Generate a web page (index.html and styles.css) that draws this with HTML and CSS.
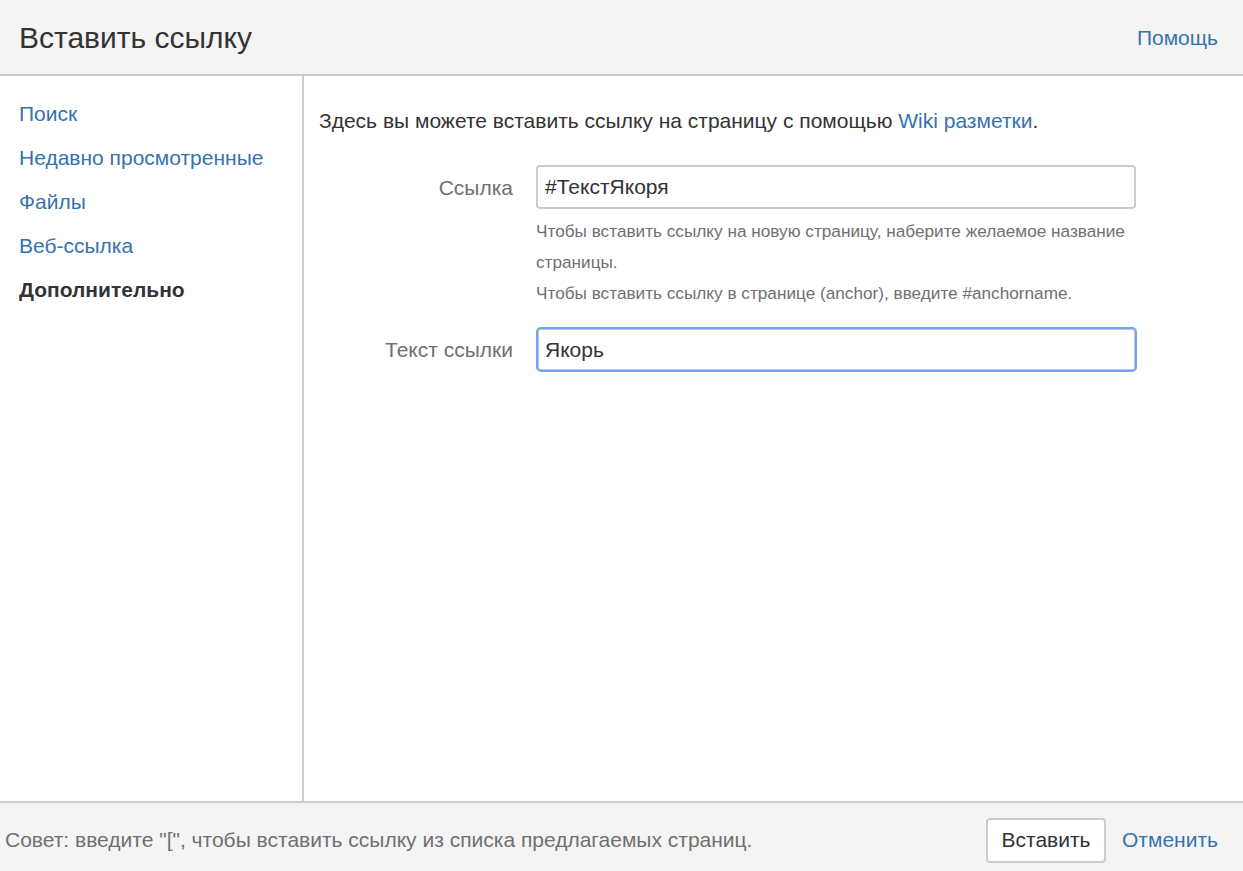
FILE: index.html
```html
<!DOCTYPE html>
<html lang="ru">
<head>
<meta charset="utf-8">
<title>Вставить ссылку</title>
<link rel="stylesheet" href="styles.css">
</head>
<body>
<div class="dialog">
  <header class="dlg-header">
    <h2 class="dlg-title">Вставить ссылку</h2>
    <a class="link help" href="#">Помощь</a>
  </header>
  <div class="dlg-body">
    <nav class="sidebar">
      <a class="nav-item link" href="#">Поиск</a>
      <a class="nav-item link" href="#">Недавно просмотренные</a>
      <a class="nav-item link" href="#">Файлы</a>
      <a class="nav-item link" href="#">Веб-ссылка</a>
      <span class="nav-item active">Дополнительно</span>
    </nav>
    <main class="content">
      <p class="intro">Здесь вы можете вставить ссылку на страницу с помощью <a class="link" href="#">Wiki разметки</a>.</p>
      <div class="field">
        <label class="label">Ссылка</label>
        <div class="control">
          <div class="input">#ТекстЯкоря</div>
          <div class="hint">Чтобы вставить ссылку на новую страницу, наберите желаемое название страницы.<br>Чтобы вставить ссылку в странице (anchor), введите #anchorname.</div>
        </div>
      </div>
      <div class="field field2">
        <label class="label">Текст ссылки</label>
        <div class="control">
          <div class="input focus">Якорь</div>
        </div>
      </div>
    </main>
  </div>
  <footer class="dlg-footer">
    <span class="tip">Совет: введите "[", чтобы вставить ссылку из списка предлагаемых страниц.</span>
    <div class="actions">
      <button class="btn">Вставить</button>
      <a class="link cancel" href="#">Отменить</a>
    </div>
  </footer>
</div>
</body>
</html>
```
FILE: styles.css
```css
* { box-sizing: border-box; }
html, body { margin: 0; padding: 0; }
body {
  font-family: "Liberation Sans", Arial, sans-serif;
  color: #333;
  background: #fff;
  width: 1243px;
  height: 871px;
  overflow: hidden;
}
.dialog {
  display: flex;
  flex-direction: column;
  height: 871px;
}
.link { color: #3572b0; text-decoration: none; }
.dlg-header {
  height: 76px;
  background: #f4f4f4;
  border-bottom: 2px solid #cccccc;
  display: flex;
  align-items: center;
  justify-content: space-between;
  padding: 0 25px 0 19px;
  flex: none;
}
.dlg-title {
  margin: 0;
  font-weight: normal;
  font-size: 30px;
  color: #333;
  position: relative;
  top: 1px;
}
.help { font-size: 21px; position: relative; top: 1px; }
.dlg-body {
  flex: 1;
  display: flex;
  min-height: 0;
}
.sidebar {
  width: 304px;
  border-right: 2px solid #cccccc;
  padding: 16px 0 0 19px;
  display: flex;
  flex-direction: column;
  flex: none;
}
.nav-item {
  font-size: 21px;
  line-height: 44px;
}
.active { font-weight: bold; color: #333; }
.content {
  flex: 1;
  padding: 33px 0 0 15px;
}
.intro {
  margin: 0;
  font-size: 21px;
  line-height: 24px;
}
.field {
  display: flex;
  margin-top: 32px;
}
.field2 { margin-top: 18px; }
.label {
  width: 217px;
  text-align: right;
  padding-right: 23px;
  font-size: 21px;
  color: #707070;
  line-height: 46px;
  flex: none;
}
.control { width: 600px; }
.input {
  height: 44px;
  border: 2px solid #cccccc;
  border-radius: 4px;
  font-size: 21px;
  line-height: 40px;
  padding: 0 7px;
  color: #333;
  background: #fff;
}
.field:first-child .label { line-height: 44px; }
.input.focus {
  border: 1px solid #c4c4c4;
  border-radius: 3px;
  height: 41px;
  line-height: 39px;
  margin: 2px 0 0 2px;
  width: 597px;
  padding: 0 6px;
  outline: 2px solid #6ea4f2;
  outline-offset: 0;
}
.hint {
  font-size: 17.2px;
  color: #707070;
  line-height: 31px;
  margin-top: 7px;
}
.dlg-footer {
  flex: none;
  height: 70px;
  border-top: 2px solid #cccccc;
  background: #f4f4f4;
  display: flex;
  align-items: center;
  justify-content: space-between;
  padding: 6px 25px 0 5px;
}
.tip { font-size: 21px; color: #707070; }
.actions { display: flex; align-items: center; }
.btn {
  font-family: inherit;
  font-size: 21px;
  color: #333;
  background: #fff;
  border: 2px solid #cccccc;
  border-radius: 4px;
  height: 45px;
  width: 120px;
  padding: 0;
  margin-right: 16px;
}
.cancel { font-size: 21px; }
```
